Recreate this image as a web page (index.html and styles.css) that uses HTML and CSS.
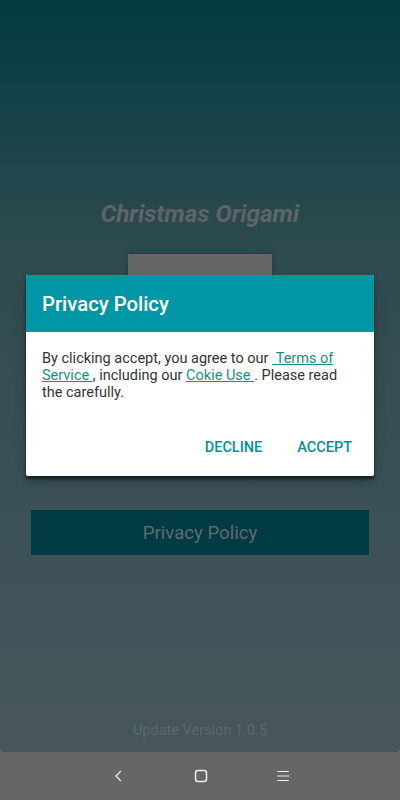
FILE: index.html
```html
<!DOCTYPE html>
<html lang="en">
<head>
    <meta charset="UTF-8">
    <meta name="viewport" content="width=device-width, initial-scale=1.0">
    <title>Christmas Origami</title>
    <link rel="stylesheet" href="styles.css">
</head>
<body>
    <div id="screen">

    <div id="app">
        <h1 class="app-title">Christmas Origami</h1>
        <div class="cover"></div>
        <button class="policy-btn">Privacy Policy</button>
        <p class="version">Update Version 1.0.5</p>
    </div>

    <div id="navbar">
        <svg class="nav-icon" viewBox="0 0 16 16" width="16" height="16">
            <path d="M10 3 L5 8 L10 13" fill="none" stroke="#eee" stroke-width="1.4"/>
        </svg>
        <svg class="nav-icon" viewBox="0 0 16 16" width="16" height="16">
            <rect x="2.5" y="2.5" width="11" height="11" rx="2.5" fill="none" stroke="#eee" stroke-width="1.5"/>
        </svg>
        <svg class="nav-icon" viewBox="0 0 16 16" width="16" height="16">
            <path d="M2 3.5 H14 M2 8 H14 M2 12.5 H14" fill="none" stroke="#eee" stroke-width="1.2"/>
        </svg>
    </div>

    </div>

    <div id="dialog">
        <div class="dialog-head">Privacy Policy</div>
        <div class="dialog-body">
            By clicking accept, you agree to our <a href="#">&nbsp;Terms of Service </a> , including our <a href="#">Cokie Use </a>. Please read the carefully.
        </div>
        <div class="dialog-actions">
            <button class="action">Decline</button>
            <button class="action">Accept</button>
        </div>
    </div>
</body>
</html>
```

FILE: styles.css
```css
body{
    margin: 0px;
    font-family: Roboto, "Liberation Sans", sans-serif;
    background-color: #666666;
}
#screen{
    height: 800px;
    display: flex;
    flex-direction: column;
}
#app{
    height: 752px;
    display: flex;
    flex-direction: column;
    align-items: center;
    background: linear-gradient(#023a42, #2e4b4f 33%, #46565b 95%);
    border-radius: 0 0 4px 4px;
}
.app-title{
    margin: 199px 0 0 0;
    font-size: 24.3px;
    font-style: italic;
    font-weight: 700;
    line-height: 30px;
    color: #5f6566;
}
.cover{
    width: 144px;
    height: 216px;
    margin-top: 25px;
    background-color: #666666;
    box-shadow: 0 0 6px rgba(0, 0, 0, 0.25);
}
.policy-btn{
    width: 338px;
    height: 45px;
    margin-top: 40px;
    border: none;
    background-color: #003a43;
    color: #5d6c6f;
    font-family: Roboto, "Liberation Sans", sans-serif;
    font-size: 18.6px;
}
.version{
    margin: auto 0 13px 0;
    font-size: 14.5px;
    color: #5a6a6e;
}
#navbar{
    flex: 1;
    display: flex;
    justify-content: center;
    align-items: center;
    gap: 66px;
    padding-left: 2px;
}
.nav-icon{
    display: block;
}
#dialog{
    position: absolute;
    top: 275px;
    left: 26px;
    width: 348px;
    height: 201px;
    background-color: white;
    border-radius: 2px;
    box-shadow: 0 3px 3px rgba(0, 0, 0, 0.55), 0 6px 14px rgba(0, 0, 0, 0.2);
    display: flex;
    flex-direction: column;
}
.dialog-head{
    height: 57px;
    padding: 0 16px;
    display: flex;
    align-items: center;
    background-color: #0096a5;
    color: white;
    font-size: 20.3px;
    font-weight: 500;
    border-radius: 2px 2px 0 0;
}
.dialog-body{
    padding: 18px 16px 0 16px;
    font-size: 14.5px;
    line-height: 17px;
    color: #333333;
}
.dialog-body a{
    color: #16917f;
}
.dialog-actions{
    margin-top: auto;
    padding: 0 14px 11px 8px;
    display: flex;
    justify-content: flex-end;
    gap: 19px;
}
.action{
    height: 36px;
    padding: 0 8px;
    border: none;
    background-color: white;
    color: #00919e;
    font-family: Roboto, "Liberation Sans", sans-serif;
    font-size: 14.5px;
    font-weight: 500;
    text-transform: uppercase;
}
```
